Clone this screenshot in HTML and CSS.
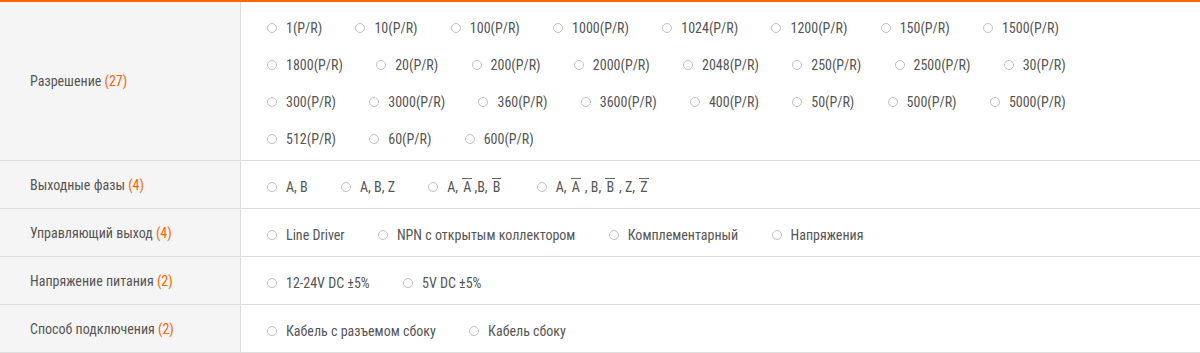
FILE: index.html
```html
<!DOCTYPE html>
<html lang="ru">
<head>
<meta charset="utf-8">
<title>Фильтр</title>
<link rel="stylesheet" href="styles.css">
</head>
<body>
<div class="filter">
  <div class="row">
    <div class="label">Разрешение <span class="count">(27)</span></div>
    <div class="values">
      <label class="opt"><span class="radio"></span>1(P/R)</label>
      <label class="opt"><span class="radio"></span>10(P/R)</label>
      <label class="opt"><span class="radio"></span>100(P/R)</label>
      <label class="opt"><span class="radio"></span>1000(P/R)</label>
      <label class="opt"><span class="radio"></span>1024(P/R)</label>
      <label class="opt"><span class="radio"></span>1200(P/R)</label>
      <label class="opt"><span class="radio"></span>150(P/R)</label>
      <label class="opt"><span class="radio"></span>1500(P/R)</label>
      <label class="opt"><span class="radio"></span>1800(P/R)</label>
      <label class="opt"><span class="radio"></span>20(P/R)</label>
      <label class="opt"><span class="radio"></span>200(P/R)</label>
      <label class="opt"><span class="radio"></span>2000(P/R)</label>
      <label class="opt"><span class="radio"></span>2048(P/R)</label>
      <label class="opt"><span class="radio"></span>250(P/R)</label>
      <label class="opt"><span class="radio"></span>2500(P/R)</label>
      <label class="opt"><span class="radio"></span>30(P/R)</label>
      <label class="opt"><span class="radio"></span>300(P/R)</label>
      <label class="opt"><span class="radio"></span>3000(P/R)</label>
      <label class="opt"><span class="radio"></span>360(P/R)</label>
      <label class="opt"><span class="radio"></span>3600(P/R)</label>
      <label class="opt"><span class="radio"></span>400(P/R)</label>
      <label class="opt"><span class="radio"></span>50(P/R)</label>
      <label class="opt"><span class="radio"></span>500(P/R)</label>
      <label class="opt"><span class="radio"></span>5000(P/R)</label>
      <label class="opt"><span class="radio"></span>512(P/R)</label>
      <label class="opt"><span class="radio"></span>60(P/R)</label>
      <label class="opt"><span class="radio"></span>600(P/R)</label>
    </div>
  </div>
  <div class="row">
    <div class="label">Выходные фазы <span class="count">(4)</span></div>
    <div class="values">
      <label class="opt"><span class="radio"></span>A, B</label>
      <label class="opt"><span class="radio"></span>A, B, Z</label>
      <label class="opt"><span class="radio"></span>A,&nbsp;<span class="ov">A</span>,B,&nbsp;<span class="ov">B</span></label>
      <label class="opt"><span class="radio"></span>A,&nbsp;<span class="ov wide">A</span>, B,&nbsp;<span class="ov wide">B</span>, Z,&nbsp;<span class="ov">Z</span></label>
    </div>
  </div>
  <div class="row">
    <div class="label">Управляющий выход <span class="count">(4)</span></div>
    <div class="values">
      <label class="opt"><span class="radio"></span>Line Driver</label>
      <label class="opt"><span class="radio"></span>NPN с открытым коллектором</label>
      <label class="opt"><span class="radio"></span>Комплементарный</label>
      <label class="opt"><span class="radio"></span>Напряжения</label>
    </div>
  </div>
  <div class="row">
    <div class="label">Напряжение питания <span class="count">(2)</span></div>
    <div class="values">
      <label class="opt"><span class="radio"></span>12-24V DC ±5%</label>
      <label class="opt"><span class="radio"></span>5V DC ±5%</label>
    </div>
  </div>
  <div class="row">
    <div class="label">Способ подключения <span class="count">(2)</span></div>
    <div class="values">
      <label class="opt"><span class="radio"></span>Кабель с разъемом сбоку</label>
      <label class="opt"><span class="radio"></span>Кабель сбоку</label>
    </div>
  </div>
</div>
</body>
</html>
```
FILE: styles.css
```css
html, body {
  margin: 0;
  padding: 0;
  background: #fff;
}
body {
  font-family: "Roboto Condensed", Roboto, "Liberation Sans", sans-serif;
  font-size: 14px;
  color: #555;
}
.filter {
  width: 1200px;
  border-top: 2px solid #fe6400;
}
.row {
  display: grid;
  grid-template-columns: 241px 1fr;
  border-bottom: 1px solid #dedede;
}
.label {
  box-sizing: border-box;
  background: #f5f5f5;
  border-right: 1px solid #dedede;
  padding: 0 0 0 30px;
  display: flex;
  align-items: center;
  white-space: pre;
}
.count {
  color: #fe6400;
}
.values {
  box-sizing: border-box;
  padding: 7px 80px 3px 26px;
  display: flex;
  flex-wrap: wrap;
  column-gap: 33.3px;
}
.opt {
  display: flex;
  align-items: center;
  height: 37px;
  white-space: nowrap;
  cursor: pointer;
}
.radio {
  box-sizing: border-box;
  width: 10px;
  height: 10px;
  border: 1px solid #c2c2c2;
  border-radius: 50%;
  background: #fff;
  margin-right: 9px;
  flex: none;
}
.ov {
  border-top: 1px solid #666;
  padding: 0 1px;
  margin: 0 2px 0 1px;
  line-height: 1.15;
}
.ov.wide {
  margin-right: 4px;
}
```
